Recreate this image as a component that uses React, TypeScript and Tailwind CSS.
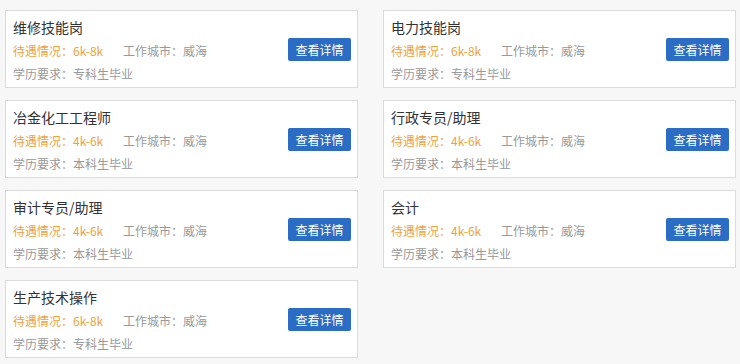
const jobs = [
  { title: '维修技能岗', salary: '6k-8k', edu: '专科生毕业' },
  { title: '电力技能岗', salary: '6k-8k', edu: '专科生毕业' },
  { title: '冶金化工工程师', salary: '4k-6k', edu: '本科生毕业' },
  { title: '行政专员/助理', salary: '4k-6k', edu: '本科生毕业' },
  { title: '审计专员/助理', salary: '4k-6k', edu: '本科生毕业' },
  { title: '会计', salary: '4k-6k', edu: '本科生毕业' },
  { title: '生产技术操作', salary: '6k-8k', edu: '专科生毕业' },
];

function JobCard({ title, salary, edu }: { title: string; salary: string; edu: string }) {
  return (
    <div className="flex h-[78px] items-center justify-between border border-[#dcdcdc] bg-white pl-[7px] pr-[6px]">
      <div className="flex flex-col pt-[2px]">
        <div className="text-[14px] leading-[23px] text-[#333]">{title}</div>
        <div className="flex text-[12px] leading-[23px]">
          <span className="w-[110px] text-[#f0a23a]">待遇情况：{salary}</span>
          <span className="text-[#999]">工作城市：威海</span>
        </div>
        <div className="text-[12px] leading-[23px] text-[#999]">学历要求：{edu}</div>
      </div>
      <button className="mt-[1px] h-[23px] w-[63px] rounded-[2px] bg-[#2b6cc4] text-[12px] text-white">
        查看详情
      </button>
    </div>
  );
}

export default function App() {
  return (
    <div
      className="h-[364px] w-[740px] bg-[#f7f7f7] pl-[5px] pt-[10px]"
      style={{ fontFamily: '"Noto Sans CJK SC", "Liberation Sans", sans-serif' }}
    >
      <div className="grid grid-cols-[353px_353px] gap-x-[25px] gap-y-[12px]">
        {jobs.map((j) => (
          <JobCard key={j.title} {...j} />
        ))}
      </div>
    </div>
  );
}
